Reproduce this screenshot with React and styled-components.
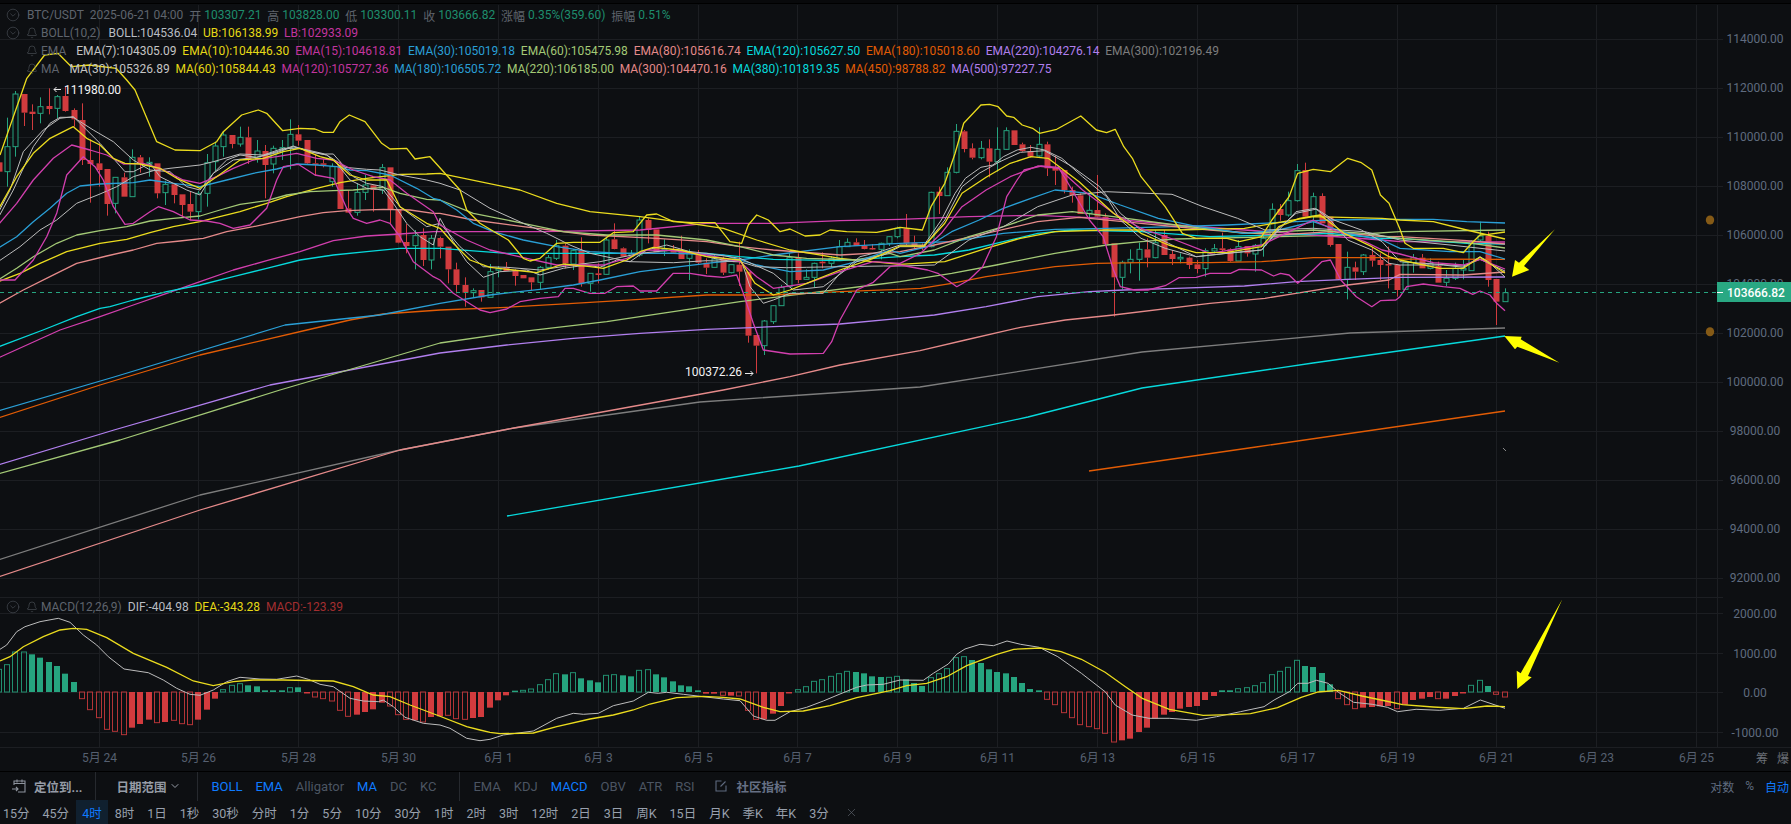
import React from "react";
import styled, { createGlobalStyle } from "styled-components";
import { CircleChevronDown, Bell, ChevronDown, X } from "lucide-react";

const FONT = `Roboto, "Noto Sans CJK SC", "Liberation Sans", sans-serif`;
const BG = "#0d0f12";
const UP = "#26a47f";
const DOWN = "#d13b3e";

const Global = createGlobalStyle`
  html, body { margin: 0; padding: 0; background: ${BG}; overflow: hidden; }
  body { font-family: ${FONT}; }
`;

const Page = styled.div`
  width: 1791px; height: 824px; display: flex; flex-direction: column;
  background: ${BG}; overflow: hidden; font-family: ${FONT}; font-size: 12px;
`;
const TopStrip = styled.div`
  height: 4px; flex: none; background: #08090b; border-bottom: 1px solid #000; box-sizing: border-box;
`;
const ChartArea = styled.div`
  position: relative; flex: none; height: 767px;
`;
const ChartSvg = styled.svg`
  display: block; width: 1791px; height: 767px;
  text { font-family: ${FONT}; font-size: 12px; }
`;
const Legend = styled.div`
  position: absolute; left: 0; top: 2px; display: flex; flex-direction: column;
`;
const LegendRow = styled.div`
  display: flex; align-items: center; height: 18px; white-space: nowrap;
`;
const Collapse = styled.span`
  width: 14px; height: 14px; margin-left: 6px; margin-right: ${(p) => p.$mr || 0}px; display: flex; color: #50555d; flex: none;
`;
const BellSlot = styled.span`
  width: 12px; height: 12px; display: flex; color: #50555d; margin-left: ${(p) => p.$ml || 0}px; margin-right: 3px; flex: none;
`;
const Label = styled.span`
  color: #5f646d; margin-right: ${(p) => p.$mr ?? 6}px;
`;
const Value = styled.span`
  color: ${(p) => p.$c}; margin-right: ${(p) => p.$mr ?? 5.8}px;
`;
const MacdLegend = styled(LegendRow)`
  position: absolute; left: 0; top: 594px;
`;

const Toolbar = styled.div`
  flex: none; height: 29px; box-sizing: border-box; border-top: 1px solid #000; display: flex; align-items: center;
  font-size: 13px;
`;
const Divider = styled.span`
  width: 1px; height: 29px; background: #26292e; flex: none;
`;
const Group = styled.div`
  display: flex; align-items: center; gap: ${(p) => p.$gap ?? 13}px; flex: none;
  padding: 0 ${(p) => p.$pr ?? 13}px 0 ${(p) => p.$pl ?? 13}px;
`;
const StrongButton = styled.span`
  display: flex; align-items: center; font-weight: 700; font-size: 12.5px; color: #969ca6;
`;
const Indicator = styled.span`
  color: ${(p) => (p.$on ? "#0f7bff" : "#4c5562")};
`;
const Community = styled.span`
  display: flex; align-items: center; gap: 9px; margin-left: 8px; color: #667085; font-weight: 700; font-size: 12.5px;
`;
const RightTools = styled.div`
  margin-left: auto; display: flex; align-items: center; gap: 11px; padding-right: 2px; font-size: 12px;
`;
const ScaleOpt = styled.span`
  color: ${(p) => (p.$on ? "#0f7bff" : "#5f6b7f")};
`;
const TabRow = styled.div`
  flex: none; height: 24px; display: flex; align-items: stretch; margin-left: -3.5px; font-size: 12.5px;
`;
const Tab = styled.span`
  display: flex; align-items: center; padding: 0 6.5px; color: ${(p) => (p.$on ? "#0f7bff" : "#98a0ad")};
  background: ${(p) => (p.$on ? "#10202f" : "transparent")};
`;
const CloseTab = styled.span`
  display: flex; align-items: center; margin-left: 10px; color: #5f646d;
`;

/* ---- data helpers: points are read off the picture in a few local frames ---- */
const FRAMES = {
  T: (c, z) => [c / 2.24, z / 3],
  A: (c, z) => [c / 3, 80 + z / 3],
  B: (c, z) => [440 + c / 3, 190 + z / 3],
  C: (c, z) => [900 + c / 2.904, 90 + z / 3],
  D: (c, z) => [1400 + c / 3, 180 + z / 3],
  P: (c, z) => [c, z],
  M: (c, z) => [c / 3, 590 + z / 3],
  N: (c, z) => [490 + c / 3, 590 + z / 3],
  O: (c, z) => [980 + c / 2.958, 590 + z / 3],
};
function pts(s) {
  const toks = s.trim().split(/\s+/);
  let f = FRAMES.P;
  const out = [];
  for (let i = 0; i < toks.length; ) {
    if (FRAMES[toks[i]]) { f = FRAMES[toks[i]]; i++; continue; }
    const p = f(+toks[i], +toks[i + 1]);
    i += 2;
    while (out.length && out[out.length - 1][0] >= p[0]) out.pop();
    out.push(p);
  }
  return out.map((p) => p[0].toFixed(1) + "," + p[1].toFixed(1)).join(" ");
}

const COL = {
  white: "#bcbcbc", yellow: "#ebdc1e", mag: "#d23fae", blue: "#2a9fd6", green: "#a3c976",
  pink: "#e58a8a", cyan: "#07d9dc", orange: "#e25c05", purple: "#b17fee", grey: "#7d7d7d",
};

const LINES = [
  ["grey", "P -2 560 200 495 400 450 514 428 700 402 890 389 920 387 1142 352 1350 333 1505 328"],
  ["pink", "P -2 577 200 510 400 450 514 428 B 850 600 1050 560 1200 525 1440 482 C 190 750 350 712 480 690 620 675 900 640 1060 625 1150 610 1300 585 1420 570 D 0 283 190 285 315 276"],
  ["cyan", "P 507 516 799 466 1028 417 1142 388 1313 363 1505 336"],
  ["orange", "P 1089 471 1256 447 1505 411"],
  ["purple", "P -2 465 114 430 270 385 440 353 B 200 465 400 445 600 430 800 418 1000 410 1200 402 1440 380 C 0 685 100 675 250 650 400 620 550 605 650 600 800 595 1000 588 1150 575 1300 568 D 0 292 315 291"],
  ["green", "P -2 474 120 440 280 390 440 343 B 200 430 500 395 700 365 900 335 1100 310 1300 285 1440 265 C 0 575 150 550 280 525 450 490 600 465 700 455 800 447 1100 440 1300 435 D 0 155 315 150"],
  ["orange", "P -2 418 100 385 200 355 307 330 350 320 383 314 B 0 360 200 352 400 340 600 328 800 315 1000 315 1200 305 1440 295 C 0 598 60 595 150 580 250 560 350 545 450 530 570 520 700 518 900 518 1050 515 1200 503 1400 503 D 0 237 315 238"],
  ["blue", "P -2 411 114 377 285 325 380 315 B 0 340 150 315 300 298 400 285 480 270 600 245 720 230 820 218 900 210 1000 195 1200 170 1400 158 C 0 460 150 455 300 430 450 418 600 415 800 410 950 405 1150 395 1250 390 1400 388 D 0 118 100 118 200 125 315 129"],
  ["mag", "P -2 358 60 330 A 300 710 400 675 500 640 600 605 700 570 800 542 900 515 1000 482 1100 468 1200 462 1300 455 B 0 125 300 125 600 120 800 100 1000 100 1200 92 1400 88 C 0 388 200 380 400 376 600 385 800 405 1000 420 1200 435 1400 450 D 0 185 315 186"],
  ["cyan", "P -2 347 43 330 A 230 710 300 685 330 680 400 660 500 635 600 615 700 590 800 565 900 540 1000 525 1100 515 1200 505 1300 505 B 0 175 200 190 500 190 800 190 900 200 1000 208 1200 212 1400 200 C 0 500 100 495 200 480 300 455 400 430 500 420 700 425 900 440 1100 435 1250 430 1400 445 D 0 175 200 190 315 192"],
  ["pink", "A -6 672 70 630 150 590 230 550 320 528 400 510 470 490 540 483 610 475 680 455 760 440 830 425 900 410 970 398 1040 392 1150 388 1230 390 1300 400 B 0 70 100 90 250 110 450 135 650 145 800 155 900 170 1000 180 1200 195 1400 185 C 0 485 100 465 250 430 400 395 520 382 700 400 900 420 1100 435 1250 425 1400 440 D 0 170 200 182 315 192"],
  ["yellow", "A -6 605 60 580 120 550 200 515 300 490 380 478 450 458 520 440 600 425 650 412 720 395 800 370 860 350 950 325 1020 308 1100 295 1200 283 1280 282 1320 280 B 240 0 350 40 450 65 600 80 750 100 850 115 950 150 1050 180 1200 205 1400 225 C 0 523 130 515 250 475 350 445 450 425 600 420 800 420 1000 415 1200 380 1400 385 D 0 120 100 125 200 150 315 177"],
  ["green", "A -6 600 50 565 100 530 170 490 230 465 300 452 380 440 450 423 520 415 600 408 660 390 720 373 800 362 860 345 930 335 1000 332 1060 330 1150 322 1200 340 1280 358 1320 368 B 0 30 100 70 250 100 370 125 500 135 650 135 800 150 900 170 1000 195 1100 205 1250 210 1350 190 1400 180 C 0 500 100 480 200 440 300 410 400 375 500 365 620 380 800 405 1000 430 1200 420 1350 430 D 0 175 200 188 315 204"],
  ["blue", "A -6 505 50 470 100 425 150 385 200 340 240 318 300 312 400 308 450 300 520 310 600 320 680 300 760 280 830 267 890 252 950 255 1010 260 1050 270 1100 272 1170 285 1250 325 1300 355 B 0 30 50 60 100 100 160 125 250 150 350 170 450 185 550 190 700 190 850 195 950 225 1050 245 1150 240 1250 215 1350 180 1400 158 C 0 490 80 470 150 425 230 390 300 355 380 325 450 300 550 310 640 345 750 385 850 407 1000 430 1100 420 1200 395 1300 430 1400 450 D 0 205 150 215 240 215 315 237"],
  ["white", "A -6 545 60 500 120 450 170 420 230 370 300 342 350 320 400 290 460 272 510 265 600 255 640 245 720 222 790 225 850 205 900 205 975 222 1000 222 1035 262 1100 268 1140 270 1200 285 1280 300 1320 310 B 60 0 150 55 250 100 320 130 390 165 450 190 520 205 570 215 700 218 800 212 900 215 950 230 1040 233 1100 232 1200 230 1330 228 1400 228 C 0 528 100 525 200 450 300 410 400 350 500 315 600 305 790 313 880 350 980 385 1060 420 1200 415 1350 425 D 0 180 150 195 315 213"],
  ["white", "A -6 415 40 330 100 200 150 130 180 112 220 112 280 150 340 185 400 240 450 270 510 275 560 320 600 330 640 280 700 240 770 232 830 218 880 200 930 215 980 225 1020 250 1060 290 1100 310 1150 320 1200 380 1280 440 1320 470 B 0 100 60 170 130 230 200 232 300 240 400 225 480 215 600 190 700 180 800 190 900 205 1000 250 1060 300 1150 290 1250 215 1330 195 1400 175 C 0 470 70 470 130 390 180 290 230 250 290 215 350 187 420 182 500 230 580 290 640 370 700 420 780 460 860 500 950 490 1050 480 1100 415 1150 370 1210 357 1260 390 1340 420 1400 455 D 0 245 190 258 240 238 315 273"],
  ["white", "A -6 400 30 330 70 215 130 150 180 115 220 110 260 150 300 190 340 235 375 275 400 275 450 250 480 290 520 310 560 330 600 345 640 280 680 240 720 225 770 232 830 215 880 198 930 215 980 225 1010 250 1050 300 1100 325 1150 330 1180 370 1220 430 1260 470 1300 495 B 0 85 40 155 80 215 130 262 180 245 260 240 300 255 370 235 440 225 480 232 530 210 570 215 620 180 680 165 750 185 820 205 880 215 905 215 930 290 970 340 1000 330 1050 310 1100 310 1150 310 1200 250 1260 200 1320 185 1400 160 C 0 465 70 465 120 390 160 310 190 265 235 232 270 225 300 200 340 180 380 172 420 180 470 205 530 260 600 320 640 390 700 445 770 475 860 500 950 490 1050 480 1100 420 1150 365 1205 355 1250 390 1300 450 1370 480 1420 520 D 0 255 130 255 190 262 240 230 265 245 315 291"],
  ["mag", "A -6 435 50 370 100 300 160 235 215 195 270 210 320 225 370 252 430 250 480 265 550 300 600 310 650 290 700 265 760 240 830 230 890 220 950 235 1000 240 1060 270 1120 290 1170 300 1220 340 1300 395 B 0 105 80 150 150 180 260 205 350 225 430 225 490 225 560 205 620 180 700 182 800 195 900 215 950 260 1000 295 1100 280 1200 245 1300 215 1400 185 C 0 520 60 490 120 430 180 350 250 300 320 260 400 228 460 235 530 300 620 370 700 415 800 450 900 490 1050 465 1120 430 1200 390 1260 420 1350 455 1400 480 D 0 222 100 248 190 255 240 238 315 267"],
  ["yellow", "A -6 390 50 290 100 220 150 175 220 140 260 175 300 195 340 235 375 250 420 252 480 265 530 295 600 325 650 290 720 240 790 235 850 215 900 205 960 230 1000 240 1050 285 1100 300 1160 300 1200 380 1280 430 B 0 115 40 160 90 210 150 232 220 240 290 248 370 222 450 230 490 235 560 210 600 185 640 172 720 180 800 200 900 210 945 280 1000 315 1050 300 1100 280 1200 240 1300 205 1400 170 C 0 468 70 468 130 400 180 310 250 262 320 220 380 200 430 205 520 275 620 370 700 430 780 465 860 488 950 487 1050 470 1100 410 1160 385 1220 375 1290 430 1370 470 1420 500 D 0 240 120 265 190 265 240 232 315 279"],
  ["yellow", "A 0 225 T 60 235 100 165 130 160 160 200 200 195 260 205 A 380 0 405 30 470 185 525 210 600 212 650 185 670 155 725 105 775 90 800 100 848 152 900 145 945 147 970 157 1000 157 1020 125 1048 105 1095 125 1145 190 1170 207 1220 205 1245 237 1290 230 B 60 0 80 60 120 100 170 130 205 150 250 205 270 213 300 205 350 160 400 157 480 157 520 128 580 125 620 75 650 72 700 95 760 98 825 98 870 155 905 160 925 105 950 75 985 90 1020 125 1050 117 1095 138 1140 135 1170 120 1220 125 1310 127 1345 120 C 0 412 65 420 90 350 130 280 160 190 185 100 235 45 260 43 285 50 310 78 330 82 355 105 385 115 405 130 455 118 525 78 570 120 600 128 625 118 650 170 675 205 700 260 770 350 820 430 860 445 950 445 985 455 1050 440 1080 390 1130 320 1155 250 1200 238 1250 245 1300 205 1340 218 1370 240 1395 315 1420 340 D 0 148 15 190 40 205 130 205 190 218 215 190 240 165 265 163 315 156"],
  ["mag", "A -6 600 45 600 100 540 140 470 170 400 200 285 250 230 285 260 310 300 340 380 375 433 400 430 450 395 475 380 520 395 570 420 620 423 660 430 700 445 750 435 800 385 830 300 850 260 895 253 945 285 1000 295 1040 385 1060 415 1100 430 1140 420 1170 430 1200 470 1240 545 1300 590 B 0 270 40 310 80 335 120 360 150 368 200 357 240 335 300 325 355 320 375 295 400 295 450 310 495 310 530 290 580 288 600 303 650 303 700 250 750 250 800 258 850 262 890 255 910 310 940 400 970 480 1050 492 1150 490 1175 455 1200 390 1250 300 1300 277 1350 230 1400 200 C 0 525 80 540 110 550 165 590 200 570 240 530 280 440 310 320 340 270 360 240 410 228 460 232 500 300 550 390 590 440 620 540 640 590 680 600 720 600 770 587 810 563 860 562 900 550 960 550 985 538 1050 540 1085 558 1105 550 1130 555 1155 580 1190 550 1225 515 1250 510 1280 570 1325 620 1370 650 1395 632 1440 630 D 0 350 20 320 70 312 130 320 180 325 218 343 240 333 270 345 290 370 315 392"],
];

const CANDLES = {
  A: "r 247 275 240 280,g 200 275 113 320,g 42 200 33 230,r 42 98 42 138,r 95 102 73 150,g 80 100 52 130,r 78 87 25 103,g 50 85 45 115,r 48 93 20 95,r 90 118 85 140,r 120 240 70 255,r 240 252 178 368,r 250 270 190 320,r 267 372 267 407,g 292 370 292 400,r 292 350 278 350,g 232 350 208 350,r 232 252 225 278,g 247 252 232 290,r 250 340 250 355,g 313 338 302 375,r 313 345 313 370,r 343 375 343 412,r 372 395 335 420,g 340 395 333 418,g 248 340 222 380,g 198 245 185 275,g 165 200 155 230,r 165 192 165 205,g 172 192 140 200,r 172 237 140 252,g 213 235 180 248,r 213 255 195 355,g 205 252 197 280,g 203 207 180 240,g 163 205 118 268,r 163 182 135 197,r 180 250 180 255,r 250 252 225 288,r 250 252 238 262,g 260 305 250 320,r 255 387 245 387,r 385 398 330 398,g 337 397 310 407,g 315 337 285 360,r 316 330 315 395,g 263 330 252 342,r 262 390 262 430,r 388 488 388 490,r 486 498 432 520,g 467 497 450 568,r 465 540 445 558,g 475 540 465 568,r 474 500 470 535",
  B: "r 170 238 170 280,r 238 285 218 310,r 285 308 262 350,g 302 308 295 323,r 300 322 300 335,g 245 322 222 322,g 236 240 228 262,r 232 243 216 243,r 240 258 238 287,r 255 265 255 265,r 262 277 262 300,g 232 277 228 297,g 203 232 195 238,g 167 205 150 210,r 167 220 160 235,g 182 222 178 240,r 180 280 142 290,g 250 280 250 305,r 250 255 220 280,g 150 253 143 255,r 148 177 100 178,r 175 200 172 200,g 192 198 180 200,g 90 195 78 200,r 90 120 85 160,r 118 187 118 187,g 178 182 148 198,r 178 188 165 190,r 185 207 137 207,g 190 205 178 270,r 190 218 180 225,r 218 233 205 252,g 207 232 195 233,r 207 248 200 255,g 224 248 224 250,r 224 245 155 288,r 245 437 245 458,r 435 467 435 550,g 393 467 390 495,g 347 395 345 402,g 292 347 285 347,g 203 290 190 290,r 202 270 190 280,g 262 268 238 270,g 220 262 218 292,r 215 220 187 235,g 205 220 198 232,g 170 205 150 205,g 157 170 145 170,r 157 168 145 168,r 167 177 150 178,r 174 178 162 180,g 160 178 158 208,g 140 160 138 168,g 115 140 110 145",
  C: "r 415 460 372 465,r 458 470 437 480,r 465 470 460 480,g 307 470 305 472,r 305 318 290 372,g 247 317 232 317,g 124 247 102 250,r 124 177 120 187,r 175 203 160 208,g 175 203 153 208,r 175 215 148 262,g 178 215 112 245,g 122 178 112 180,r 121 165 121 165,r 163 183 158 185,r 183 200 165 203,g 163 198 112 200,r 163 235 155 258,r 233 242 198 285,r 240 300 240 310,r 300 316 290 338,r 316 372 310 372,g 361 370 310 385,r 360 380 255 382,r 380 462 370 462,r 460 562 460 680,g 517 562 512 598,g 508 517 478 550,g 478 508 458 572,r 478 503 445 532,g 458 503 420 505,r 435 495 420 495,r 492 507 480 525,g 502 506 490 520,r 503 525 500 537,r 523 537 510 550,g 482 536 475 560,g 476 483 462 490,r 475 480 428 490,r 478 513 475 515,g 470 513 450 513,r 468 490 468 500,g 466 492 462 545,g 445 466 425 500,g 358 445 340 445,r 357 375 342 392,g 332 375 305 380,g 242 332 222 335,r 240 380 218 382,g 320 378 308 425,r 318 400 310 400,r 380 465 380 470,r 462 568 462 570,g 532 568 485 628,r 532 545 515 570,g 495 545 492 555,r 495 512 470 530,r 510 525 490 570,r 522 526 470 595,r 525 600 525 620,g 518 598 515 600",
  D: "g 233 248 222 278,r 233 265 222 265,g 250 265 235 268,r 258 308 245 308,g 295 307 270 318,g 265 295 248 300,g 265 270 240 298,g 183 272 180 272,g 168 180 125 183,r 168 300 155 320,r 297 365 297 435,g 338 365 325 365",
};
const OFFSET = { A: 80, B: 190, C: 90, D: 180 };
const candles = [];
for (const key of ["A", "B", "C", "D"]) {
  for (const s of CANDLES[key].split(",")) {
    const [d, t, b, h, l] = s.trim().split(" ");
    const y = (v) => OFFSET[key] + +v / 3;
    candles.push({ up: d === "g", top: y(t), bot: y(b), hi: y(h), lo: y(l) });
  }
}
const cx = (i) => -1.2 + 8.32 * i;

const HIST = "68h 82h 120h 120h 113 103 90 78 55 30 -20h -53h -77h -112h -118h -128h -107 -96 -83 -92h -90 -85h -95h -98h -83 -53 -20 7h 20h 25h 20 17 5 5 5 13h 14 -4 -15h -20h -27h -55h -73h -68 -60 -52 -32 -42h -68h -82h -85 -90h -75 -73 -70h -80h -82h -78 -75 -47 -25 -10 4 5h 9h 22h 37h 55h 53 58h 41 35 29 50h 52h 50 47 65h 67h 53 44 32 20 17 5 -5 -5 -10h -11 -12h -55h -82h -82 -65 -42 -3 7h 16h 32h 37h 47h 55h 62h 60 56 47 45 44h 47h 38 27 18 43h 55h 70h 103h 106h 96 87 68 60 56 45 27 9 5 -22h -38h -62h -77h -98h -104h -110h -124h -150h -145 -140 -120 -107 -80 -68 -60 -50 -45 -42 -24 -12 5 5 10h 13h 19h 28h 52h 62h 74h 95h 78 75 57 23 -20h -38h -50h -47 -45 -43 -42 -50h -38 -24 -20 -15 -20h -20 -12 -4 20h 35h 18 -7h -15h"
  .split(" ").map((s) => ({ v: parseFloat(s) / 3, hollow: s.endsWith("h") }));

const DIF = "M 0 178 20 165 50 125 75 110 120 95 175 85 210 97 250 135 290 165 325 200 372 237 445 248 490 270 530 295 570 313 600 316 640 300 680 275 720 262 780 267 830 268 890 258 925 268 960 283 1000 290 1050 325 1090 333 1135 335 1150 330 1180 350 1215 382 1270 400 1320 405 1350 415 1400 445 1440 452 N 0 448 40 435 130 423 200 385 250 370 280 373 325 370 370 347 430 333 475 307 505 310 530 307 580 313 640 320 700 327 750 332 790 378 830 391 855 391 900 365 950 352 1000 333 1050 312 1100 292 1130 285 1180 283 1230 270 1300 271 1330 250 1375 222 1400 193 1425 177 O 0 163 40 167 80 153 120 163 175 172 230 200 300 250 370 305 400 345 450 375 500 385 560 385 640 391 700 380 770 365 840 350 870 330 915 305 940 280 970 280 995 271 1030 280 1060 307 1105 337 1160 343 1205 352 1235 365 1290 358 1360 361 1430 355 1480 330 1553 355";
const DEA = "M 0 213 30 200 70 170 130 140 180 120 220 115 260 118 320 143 400 190 500 232 580 273 640 287 700 275 760 270 850 270 1000 273 1060 290 1120 315 1170 320 1230 345 1310 375 1400 410 1440 420 N 0 427 30 431 130 429 200 410 300 387 370 375 430 360 480 342 560 323 640 319 700 322 750 327 820 352 870 365 940 363 1020 347 1100 323 1200 302 1250 287 1310 280 1370 260 1430 227 O 0 212 50 193 100 178 180 174 240 185 300 208 370 247 430 290 480 325 560 358 660 376 740 374 800 371 880 353 950 322 1000 306 1060 301 1130 318 1200 333 1250 344 1340 351 1430 356 1500 348 1553 350";

const priceY = (p) => 382 - ((p - 100000) * 49) / 2000;
const PRICES = [114000, 112000, 110000, 108000, 106000, 104000, 102000, 100000, 98000, 96000, 94000, 92000];
const MACD_TICKS = [[2000, 613], [1000, 653], [0, 692], [-1000, 732]];
const DATES = ["5月 24", "5月 26", "5月 28", "5月 30", "6月 1", "6月 3", "6月 5", "6月 7", "6月 9", "6月 11", "6月 13", "6月 15", "6月 17", "6月 19", "6月 21", "6月 23", "6月 25"];
const gridX = (k) => Math.round(98.5 + 99.85 * k) + 0.5;

const ARROWS = [
  "1555,229.3 1524,266 1529.3,270 1512,276.7 1515,260 1519,262.7",
  "1504.3,336 1521.7,336.7 1520.7,339.3 1559.3,362.7 1517.3,346.7 1515,349.3",
  "1517.3,689 1516.7,670.7 1520.7,673.3 1562.3,599.3 1528,676 1531.7,677.3",
];

function Candle({ c, i }) {
  const x = Math.round(cx(i)) + 0.5;
  const col = c.up ? UP : DOWN;
  const h = Math.max(c.bot - c.top, 1.5);
  return (
    <g>
      <line x1={x} x2={x} y1={c.hi} y2={c.top} stroke={col} />
      <line x1={x} x2={x} y1={c.top + h} y2={c.lo} stroke={col} />
      {c.up ? (
        <rect x={x - 2.5} y={c.top} width={5} height={h} fill={BG} stroke={col} />
      ) : (
        <rect x={x - 3} y={c.top} width={6} height={h} fill={col} />
      )}
    </g>
  );
}

function Chart() {
  return (
    <ChartSvg viewBox="0 4 1791 767">
      <defs>
        <clipPath id="plot"><rect x="0" y="0" width="1717" height="747" /></clipPath>
      </defs>
      {DATES.map((_, k) => (
        <line key={k} x1={gridX(k)} x2={gridX(k)} y1="5" y2="747" stroke="#1c1e22" />
      ))}
      {PRICES.map((p) => (
        <line key={p} x1="0" x2="1723" y1={Math.round(priceY(p)) + 0.5} y2={Math.round(priceY(p)) + 0.5} stroke="#1c1e22" />
      ))}
      <line x1="0" x2="1723" y1="597.5" y2="597.5" stroke="#1c1e22" />
      {MACD_TICKS.map(([v, y]) => (
        <line key={v} x1="0" x2="1723" y1={y + 0.5} y2={y + 0.5} stroke="#1c1e22" />
      ))}
      <line x1="0" x2="1791" y1="747.5" y2="747.5" stroke="#1c1e22" />
      <line x1="1717.5" x2="1717.5" y1="5" y2="747" stroke="#1c1e22" />

      <g clipPath="url(#plot)">
        {candles.map((c, i) => <Candle key={i} c={c} i={i} />)}
        {LINES.map(([c, s], i) => (
          <polyline key={i} points={pts(s)} fill="none" stroke={COL[c]} strokeWidth={c === "white" ? 1 : 1.3} strokeLinejoin="round" />
        ))}
        <line x1="1503" y1="448" x2="1506" y2="451" stroke="#8a8a8a" />
        <line x1="0" x2="1717" y1="292.5" y2="292.5" stroke={UP} strokeDasharray="4 4" />

        {HIST.map((b, i) => {
          const x = Math.round(cx(i));
          const y = b.v > 0 ? 692 - b.v : 692;
          const h = Math.max(Math.abs(b.v), 1.5);
          const col = b.v > 0 ? UP : DOWN;
          return b.hollow ? (
            <rect key={i} x={x - 2.5} y={y} width={5} height={h} fill="none" stroke={col} strokeOpacity="0.85" />
          ) : (
            <rect key={i} x={x - 3} y={y} width={6} height={h} fill={col} />
          );
        })}
        <polyline points={pts(DIF)} fill="none" stroke={COL.white} strokeWidth="1" />
        <polyline points={pts(DEA)} fill="none" stroke={COL.yellow} strokeWidth="1.3" />
      </g>

      <path d="M61 89.5H54M56.5 87L54 89.5L56.5 92" fill="none" stroke="#e8e8e8" />
      <text x="64" y="93.5" fill="#f2f2f2">111980.00</text>
      <text x="685" y="376" fill="#f2f2f2">100372.26</text>
      <path d="M745 373.5H753M750.5 371L753 373.5L750.5 376" fill="none" stroke="#e8e8e8" />

      {ARROWS.map((a, i) => <polygon key={i} points={a} fill="#ffff00" />)}

      <ellipse cx="1710" cy="220" rx="4.2" ry="4.5" fill="#855a16" />
      <ellipse cx="1710" cy="331.7" rx="4.2" ry="4.5" fill="#855a16" />

      {PRICES.map((p) => (
        <text key={p} x="1755" y={priceY(p) + 4} textAnchor="middle" fill="#5f6b7f">{p}.00</text>
      ))}
      {MACD_TICKS.map(([v, y]) => (
        <text key={v} x="1755" y={y + 4.5} textAnchor="middle" fill="#5f6b7f">{v}.00</text>
      ))}

      <rect x="1717" y="282" width="74" height="20" fill="#29a883" />
      <line x1="1717" x2="1723" y1="292.5" y2="292.5" stroke="#fff" />
      <text x="1727" y="296.5" fill="#fff" fontWeight="500">103666.82</text>

      {DATES.map((d, k) => (
        <text key={d} x={gridX(k)} y="762" textAnchor="middle" fill="#566070">{d}</text>
      ))}
      <text x="1762" y="763" textAnchor="middle" fill="#6b7078">筹</text>
      <text x="1783" y="763" textAnchor="middle" fill="#6b7078">爆</text>
    </ChartSvg>
  );
}

const V = ({ c, mr, children }) => <Value $c={c} $mr={mr}>{children}</Value>;
const PRICE_GREEN = "#1e8d6d";

const Expand = ({ mr }) => (
  <Collapse $mr={mr}><CircleChevronDown size={14} strokeWidth={1} /></Collapse>
);
const BellIcon = ({ ml }) => (
  <BellSlot $ml={ml}><Bell size={12} strokeWidth={1.2} /></BellSlot>
);

function ChartLegend() {
  return (
    <>
      <Legend>
        <LegendRow>
          <Expand mr={7} />
          <Label>BTC/USDT</Label>
          <Label $mr={6}>2025-06-21 04:00</Label>
          <Label $mr={3}>开</Label><V c={PRICE_GREEN}>103307.21</V>
          <Label $mr={3}>高</Label><V c={PRICE_GREEN}>103828.00</V>
          <Label $mr={3}>低</Label><V c={PRICE_GREEN}>103300.11</V>
          <Label $mr={3}>收</Label><V c={PRICE_GREEN}>103666.82</V>
          <Label $mr={3}>涨幅</Label><V c={PRICE_GREEN}>0.35%(359.60)</V>
          <Label $mr={3}>振幅</Label><V c={PRICE_GREEN}>0.51%</V>
        </LegendRow>
        <LegendRow>
          <Expand />
          <BellIcon ml={6} />
          <Label $mr={8}>BOLL(10,2)</Label>
          <V c="#b9bdc3">BOLL:104536.04</V>
          <V c="#e6d916">UB:106138.99</V>
          <V c="#c2359f">LB:102933.09</V>
        </LegendRow>
        <LegendRow>
          <BellIcon ml={26} />
          <Label $mr={10}>EMA</Label>
          <V c="#c4c4c4">EMA(7):104305.09</V>
          <V c="#e6d916">EMA(10):104446.30</V>
          <V c="#c2359f">EMA(15):104618.81</V>
          <V c="#2a9fd6">EMA(30):105019.18</V>
          <V c="#a3c976">EMA(60):105475.98</V>
          <V c="#e58a8a">EMA(80):105616.74</V>
          <V c="#07d9dc">EMA(120):105627.50</V>
          <V c="#e25c05">EMA(180):105018.60</V>
          <V c="#b17fee">EMA(220):104276.14</V>
          <V c="#7d7d7d">EMA(300):102196.49</V>
        </LegendRow>
        <LegendRow>
          <BellIcon ml={26} />
          <Label $mr={10}>MA</Label>
          <V c="#c4c4c4">MA(30):105326.89</V>
          <V c="#e6d916">MA(60):105844.43</V>
          <V c="#c2359f">MA(120):105727.36</V>
          <V c="#2a9fd6">MA(180):106505.72</V>
          <V c="#a3c976">MA(220):106185.00</V>
          <V c="#e58a8a">MA(300):104470.16</V>
          <V c="#07d9dc">MA(380):101819.35</V>
          <V c="#e25c05">MA(450):98788.82</V>
          <V c="#b17fee">MA(500):97227.75</V>
        </LegendRow>
      </Legend>
      <MacdLegend>
        <Expand />
        <BellIcon ml={6} />
        <Label $mr={6}>MACD(12,26,9)</Label>
        <V c="#b9bdc3">DIF:-404.98</V>
        <V c="#e6d916">DEA:-343.28</V>
        <V c="#a32e30">MACD:-123.39</V>
      </MacdLegend>
    </>
  );
}

const LocateIcon = styled.svg`
  width: 16px; height: 16px; margin-right: 7px; flex: none;
`;
const Locate = () => (
  <LocateIcon viewBox="0 0 16 16" fill="none" stroke="#8d939d" strokeWidth="1.1">
    <path d="M3 7V3h11v11H7" />
    <path d="M3 5.5h11M6 1.5v3M11 1.5v3" />
    <path d="M1 11h6M5 9l2 2-2 2" />
  </LocateIcon>
);
const ExternalIcon = () => (
  <svg width="12" height="12" viewBox="0 0 12 12" fill="none" stroke="#5f6b7f" strokeWidth="1.1">
    <path d="M6.5 1H1v10h10V5.5" />
    <path d="M5.5 6.5L10.5 1.5" />
  </svg>
);

const MAIN = [["BOLL", 1], ["EMA", 1], ["Alligator"], ["MA", 1], ["DC"], ["KC"]];
const SUB = [["EMA"], ["KDJ"], ["MACD", 1], ["OBV"], ["ATR"], ["RSI"]];
const TABS = ["15分", "45分", "4时", "8时", "1日", "1秒", "30秒", "分时", "1分", "5分", "10分", "30分", "1时", "2时", "3时", "12时", "2日", "3日", "周K", "15日", "月K", "季K", "年K", "3分"];

export default function App() {
  return (
    <Page>
      <Global />
      <TopStrip />
      <ChartArea>
        <Chart />
        <ChartLegend />
      </ChartArea>
      <Toolbar>
        <Group $pl={11} $pr={13} $gap={0}>
          <Locate />
          <StrongButton>定位到...</StrongButton>
        </Group>
        <Divider />
        <Group $pl={20} $pr={16} $gap={3}>
          <StrongButton>日期范围</StrongButton>
          <ChevronDown size={12} color="#969ca6" />
        </Group>
        <Divider />
        <Group $pr={23}>
          {MAIN.map(([n, on]) => <Indicator key={n} $on={on}>{n}</Indicator>)}
        </Group>
        <Divider />
        <Group>
          {SUB.map(([n, on]) => <Indicator key={n} $on={on}>{n}</Indicator>)}
          <Community><ExternalIcon />社区指标</Community>
        </Group>
        <RightTools>
          <ScaleOpt>对数</ScaleOpt>
          <ScaleOpt>%</ScaleOpt>
          <ScaleOpt $on>自动</ScaleOpt>
        </RightTools>
      </Toolbar>
      <TabRow>
        {TABS.map((t) => <Tab key={t} $on={t === "4时"}>{t}</Tab>)}
        <CloseTab><X size={13} strokeWidth={1.2} /></CloseTab>
      </TabRow>
    </Page>
  );
}
